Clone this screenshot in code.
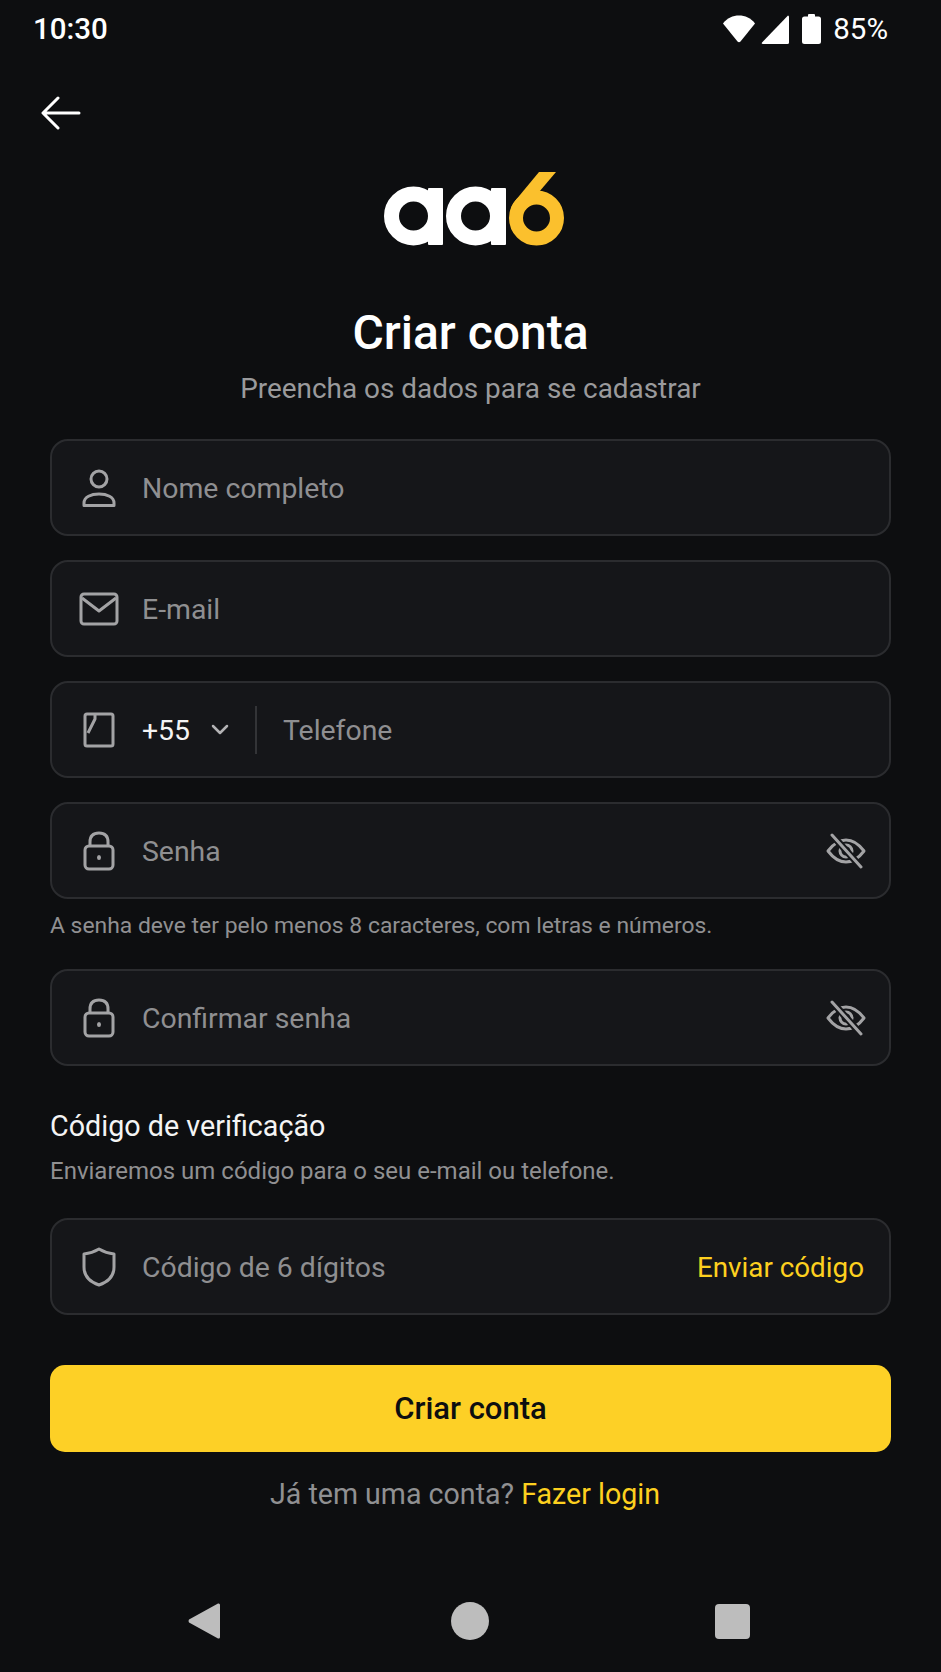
<div class="page">
	<div class="status">
		<span class="time">10:30</span>
		<div class="status-right">
			<svg class="wifi" width="34" height="28" viewBox="0 0 34 28"><path d="M1 8.500C5 3 11 0.500 17 0.500S29 3 33 8.500L18.500 26.500Q17 28 15.500 26.500Z" fill="#fff"/></svg>
			<svg class="signal" width="28" height="29" viewBox="0 0 28 29"><path d="M27 0.500Q28 0.500 28 2V27.500Q28 29 26.500 29H2Q0 29 1 27.500Z" fill="#fff"/></svg>
			<svg class="battery" width="19" height="30" viewBox="0 0 19 30"><path d="M6 2.500V1Q6 0 7 0H12Q13 0 13 1V2.500H16.500Q19 2.500 19 5V27.500Q19 30 16.500 30H2.500Q0 30 0 27.500V5Q0 2.500 2.500 2.500Z" fill="#fff"/></svg>
			<span class="pct">85%</span>
		</div>
	</div>

	<div class="back">
		<svg width="40" height="34" viewBox="0 0 40 34" fill="none" stroke="#fff" stroke-width="3" stroke-linecap="round" stroke-linejoin="round"><path d="M38 17H3M17 2L2 17L17 32"/></svg>
	</div>

	<div class="logo">
		<svg width="180" height="74" viewBox="383 172 180 74" aria-label="aa6">
			<circle cx="412.500" cy="216" r="22" fill="none" stroke="#fff" stroke-width="15"/>
			<rect x="427" y="188" width="15" height="57" rx="1" fill="#fff"/>
			<circle cx="474.500" cy="216" r="22" fill="none" stroke="#fff" stroke-width="15"/>
			<rect x="490" y="188" width="15" height="57" rx="1" fill="#fff"/>
			<circle cx="535.500" cy="218" r="20.500" fill="none" stroke="#fbc02d" stroke-width="14"/>
			<path d="M538 172H555L527 205L509 212Q510 206 514 201Z" fill="#fbc02d"/>
		</svg>
	</div>

	<h1>Criar conta</h1>
	<p class="subtitle">Preencha os dados para se cadastrar</p>

	<div class="form">
		<div class="field">
			<span class="icon">
				<svg width="40" height="40" viewBox="0 0 40 40" fill="none" stroke="#a3a3a5" stroke-width="3"><circle cx="20" cy="11" r="8"/><path d="M5 37.500V35C5 29 12 26 20 26S35 29 35 35V37.500Z" stroke-linejoin="round"/></svg>
			</span>
			<span class="placeholder">Nome completo</span>
		</div>

		<div class="field">
			<span class="icon">
				<svg width="40" height="34" viewBox="0 0 40 34" fill="none" stroke="#a3a3a5" stroke-width="3" stroke-linejoin="round"><rect x="2" y="2" width="36" height="30" rx="3"/><path d="M3 6L20 19L37 6"/></svg>
			</span>
			<span class="placeholder">E-mail</span>
		</div>

		<div class="field">
			<span class="icon">
				<svg width="34" height="38" viewBox="0 0 34 38" fill="none" stroke="#a3a3a5" stroke-width="3" stroke-linejoin="round"><path d="M3 5Q3 3 5 3H29Q31 3 31 5V33Q31 35 29 35H5Q3 35 3 33ZM13 3V8L6 22"/></svg>
			</span>
			<span class="code">+55</span>
			<svg class="chevron" width="18" height="11" viewBox="0 0 18 11" fill="none" stroke="#b3b3b5" stroke-width="2.500" stroke-linecap="round" stroke-linejoin="round"><path d="M2 2L9 9L16 2"/></svg>
			<span class="divider"></span>
			<span class="placeholder">Telefone</span>
		</div>

		<div class="field">
			<span class="icon">
				<svg width="32" height="40" viewBox="0 0 32 40" fill="none" stroke="#a3a3a5" stroke-width="3"><rect x="2" y="15" width="28" height="23" rx="4"/><path d="M7 15V11C7 5 10 2 16 2S25 5 25 11V15"/><ellipse cx="16" cy="26.500" rx="2" ry="2.500" fill="#a3a3a5" stroke="none"/></svg>
			</span>
			<span class="placeholder">Senha</span>
			<svg class="eye" width="40" height="36" viewBox="0 0 40 36" fill="none" stroke="#a3a3a5" stroke-width="3" stroke-linecap="round" stroke-linejoin="round"><path d="M2 18C8 10 14 7 20 7S32 10 38 18C32 26 26 29 20 29S8 26 2 18Z"/><circle cx="20" cy="18" r="6"/><path d="M6 2L35 34" stroke="#151619" stroke-width="7"/><path d="M6 2L35 34"/></svg>
		</div>
		<p class="hint">A senha deve ter pelo menos 8 caracteres, com letras e números.</p>

		<div class="field confirm">
			<span class="icon">
				<svg width="32" height="40" viewBox="0 0 32 40" fill="none" stroke="#a3a3a5" stroke-width="3"><rect x="2" y="15" width="28" height="23" rx="4"/><path d="M7 15V11C7 5 10 2 16 2S25 5 25 11V15"/><ellipse cx="16" cy="26.500" rx="2" ry="2.500" fill="#a3a3a5" stroke="none"/></svg>
			</span>
			<span class="placeholder">Confirmar senha</span>
			<svg class="eye" width="40" height="36" viewBox="0 0 40 36" fill="none" stroke="#a3a3a5" stroke-width="3" stroke-linecap="round" stroke-linejoin="round"><path d="M2 18C8 10 14 7 20 7S32 10 38 18C32 26 26 29 20 29S8 26 2 18Z"/><circle cx="20" cy="18" r="6"/><path d="M6 2L35 34" stroke="#151619" stroke-width="7"/><path d="M6 2L35 34"/></svg>
		</div>

		<h2>Código de verificação</h2>
		<p class="sub">Enviaremos um código para o seu e-mail ou telefone.</p>

		<div class="field">
			<span class="icon">
				<svg width="34" height="40" viewBox="0 0 34 40" fill="none" stroke="#a3a3a5" stroke-width="3" stroke-linejoin="round"><path d="M17 2C22 5 27 6.500 32 7V20C32 29 26 35 17 38C8 35 2 29 2 20V7C7 6.500 12 5 17 2Z"/></svg>
			</span>
			<span class="placeholder">Código de 6 dígitos</span>
			<span class="send">Enviar código</span>
		</div>

		<button class="submit">Criar conta</button>
		<p class="login">Já tem uma conta? <span class="link">Fazer login</span></p>
	</div>

	<div class="nav">
		<svg width="32" height="36" viewBox="0 0 32 36"><path d="M30 0.500Q32 0 32 2V34Q32 36 30 35.500L1 19.500Q0 18 1 16.500Z" fill="#bdbdbd"/></svg>
		<span class="home"></span>
		<span class="recent"></span>
	</div>
</div>

<style>
	:global(body) {
		margin: 0;
		background: #0d0e10;
	}

	.page {
		width: 941px;
		height: 1672px;
		background: #0d0e10;
		font-family: Roboto, sans-serif;
		color: #fff;
		display: flex;
		flex-direction: column;
		overflow: hidden;
	}

	.status {
		height: 58px;
		padding: 0 53px 0 33px;
		display: flex;
		align-items: center;
		justify-content: space-between;
		font-size: 29.500px;
	}

	.time {
		font-weight: 500;
	}

	.status-right {
		display: flex;
		align-items: center;
	}

	.signal {
		margin-left: 5px;
	}

	.battery {
		margin-left: 13px;
	}

	.pct {
		margin-left: 12px;
	}

	.back {
		height: 34px;
		margin-top: 38px;
		padding-left: 41px;
	}

	.logo {
		display: flex;
		justify-content: center;
		margin: 42px 0 0 6px;
		height: 74px;
	}

	h1 {
		margin: 60px 0 0;
		height: 54px;
		line-height: 54px;
		font-size: 48px;
		font-weight: 500;
		text-align: center;
	}

	.subtitle {
		margin: 12px 0 0;
		line-height: 34px;
		font-size: 27.900px;
		color: #9a9a9c;
		text-align: center;
	}

	.form {
		margin-top: 33px;
		padding: 0 50px;
		display: flex;
		flex-direction: column;
	}

	.field {
		box-sizing: border-box;
		height: 97px;
		margin-bottom: 24px;
		padding: 0 25px 0 27px;
		display: flex;
		align-items: center;
		background: #151619;
		border: 2px solid #2b2c2f;
		border-radius: 18px;
		font-size: 28.400px;
	}

	.icon {
		width: 40px;
		margin-right: 23px;
		display: flex;
		justify-content: center;
	}

	.placeholder,
	.code,
	.send {
		padding-top: 2px;
	}

	.placeholder {
		color: #8f8f91;
	}

	.code {
		color: #f4f4f4;
	}

	.chevron {
		margin-left: 21px;
	}

	.divider {
		width: 2px;
		height: 48px;
		margin: 0 26px;
		background: #333437;
	}

	.eye {
		margin-left: auto;
		margin-right: -2px;
	}

	.hint {
		margin: -12px 0 28px;
		line-height: 30px;
		font-size: 22.900px;
		color: #909092;
	}

	.confirm {
		margin-bottom: 0;
	}

	h2 {
		margin: 43px 0 0;
		line-height: 34px;
		font-size: 28.700px;
		font-weight: 400;
		color: #f4f4f4;
	}

	.sub {
		margin: 13px 0 32px;
		line-height: 30px;
		font-size: 24px;
		color: #909092;
	}

	.send {
		margin-left: auto;
		color: #fdd01f;
		font-size: 27.800px;
	}

	.submit {
		height: 87px;
		margin-top: 26px;
		border: 0;
		border-radius: 15px;
		background: #fdd026;
		color: #0d0e10;
		font-family: inherit;
		font-size: 31px;
		font-weight: 500;
	}

	.login {
		margin: 24px 0 0;
		padding-right: 11px;
		line-height: 36px;
		font-size: 28.600px;
		text-align: center;
		color: #909092;
	}

	.link {
		color: #fdd01f;
	}

	.nav {
		margin-top: auto;
		height: 36px;
		margin-bottom: 33px;
		padding: 0 191px 0 188px;
		display: flex;
		align-items: center;
		justify-content: space-between;
	}

	.home {
		width: 38px;
		height: 38px;
		margin-left: 5px;
		border-radius: 50%;
		background: #bdbdbd;
	}

	.recent {
		width: 35px;
		height: 35px;
		border-radius: 4px;
		background: #bdbdbd;
	}
</style>
